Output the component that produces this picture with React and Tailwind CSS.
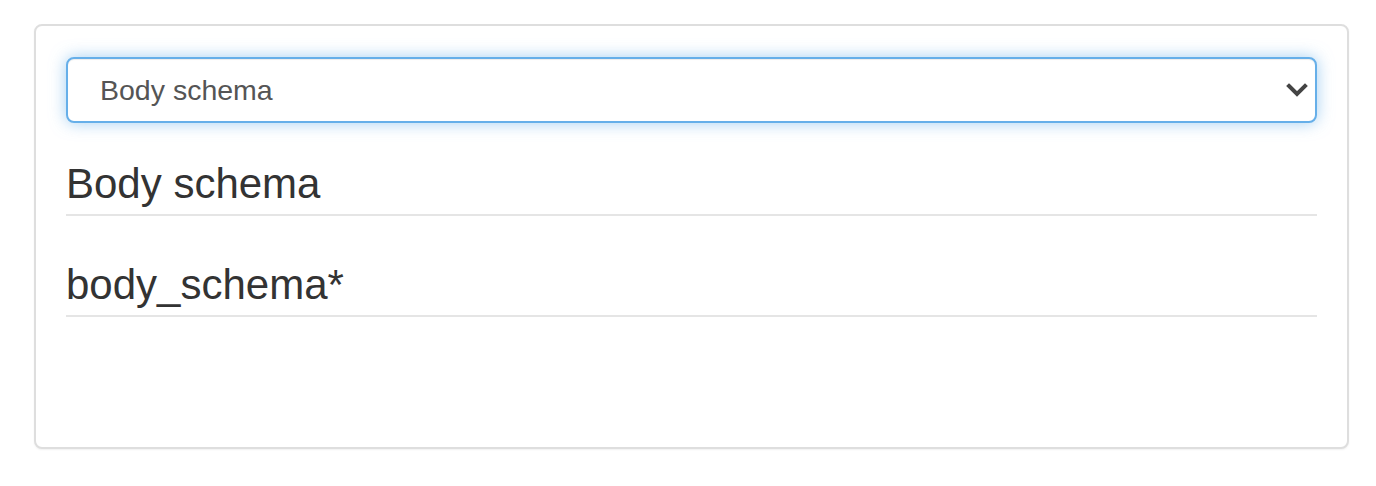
export default function App() {
  return (
    <div className="min-h-[486px] bg-white pt-[24px] font-['Liberation_Sans',Arial,sans-serif]">
      <div className="ml-[34px] h-[425px] w-[1315px] rounded-[8px] border-2 border-[#dedede] bg-white px-[30px] pt-[31px] shadow-[0_1px_2px_rgba(0,0,0,0.06)]">
        <div className="flex h-[66px] items-center justify-between rounded-[8px] border-2 border-[#66afe9] bg-white pl-[32px] pr-[6px] shadow-[inset_0_1px_1px_rgba(0,0,0,0.075),0_0_16px_rgba(102,175,233,0.6)]">
          <span className="text-[28.5px] text-[#555]">Body schema</span>
          <svg width="24" height="16" viewBox="0 0 24 16" className="text-[#444]">
            <polyline
              points="4,4 12,12 20,4"
              fill="none"
              stroke="currentColor"
              strokeWidth="4"
              strokeLinecap="square"
            />
          </svg>
        </div>

        <div className="mt-[37px] border-b-2 border-[#e5e5e5] pb-[6px] text-[42px] leading-[48px] text-[#333]">
          Body schema
        </div>
        <div className="mt-[45px] border-b-2 border-[#e5e5e5] pb-[6px] text-[42px] leading-[48px] text-[#333]">
          body_schema*
        </div>
      </div>
    </div>
  );
}
